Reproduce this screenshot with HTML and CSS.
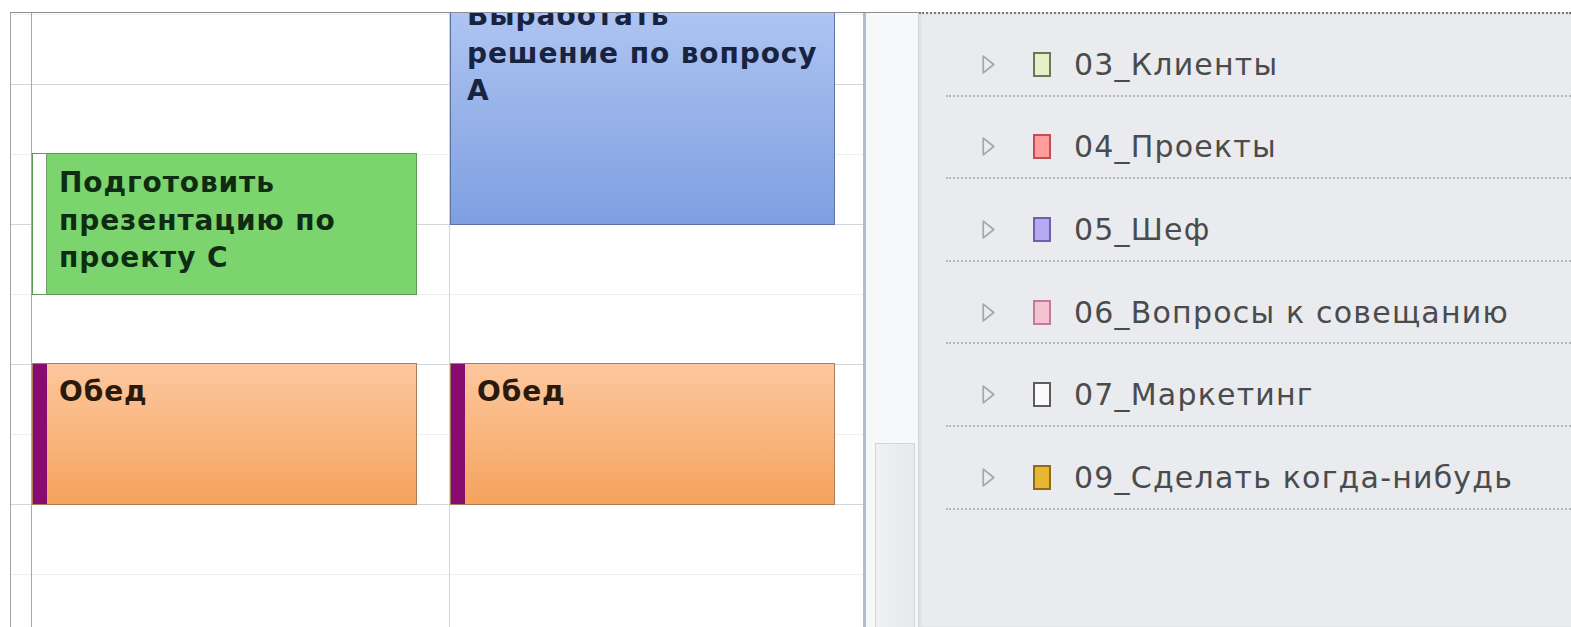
FILE: index.html
```html
<!DOCTYPE html>
<html lang="ru">
<head>
<meta charset="utf-8">
<title>Календарь</title>
<link rel="stylesheet" href="styles.css">
</head>
<body>
<div class="screen">
  <section class="cal">
    <div class="gutter"></div>
    <div class="frame">
      <div class="sheet">
        <div class="timecol"></div>

        <div class="day">
          <div class="appt appt--green" style="grid-row: 4 / 6">
            <span class="appt__status appt__status--free"></span>
            <div class="appt__body">
              <p class="appt__title">Подготовить<br>презентацию по<br>проекту С</p>
            </div>
          </div>
          <div class="appt appt--orange" style="grid-row: 7 / 9">
            <span class="appt__status appt__status--oof"></span>
            <div class="appt__body">
              <p class="appt__title">Обед</p>
            </div>
          </div>
        </div>

        <div class="day day--last">
          <div class="appt appt--blue appt--offset" style="grid-row: 1 / 5">
            <div class="appt__body">
              <p class="appt__title">Выработать<br>решение по вопросу<br>А</p>
            </div>
          </div>
          <div class="appt appt--orange" style="grid-row: 7 / 9">
            <span class="appt__status appt__status--oof"></span>
            <div class="appt__body">
              <p class="appt__title">Обед</p>
            </div>
          </div>
        </div>
      </div>
    </div>
  </section>

  <div class="vscroll">
    <div class="vscroll__track"></div>
    <div class="vscroll__thumb"></div>
  </div>

  <aside class="panel">
    <ul class="cats">
      <li class="cat">
        <svg class="cat__arrow" viewBox="0 0 14 20" aria-hidden="true"><polygon points="2,2 12,10 2,18"/></svg>
        <span class="cat__swatch cat__swatch--clients"></span>
        <span class="cat__name">03_Клиенты</span>
      </li>
      <li class="cat">
        <svg class="cat__arrow" viewBox="0 0 14 20" aria-hidden="true"><polygon points="2,2 12,10 2,18"/></svg>
        <span class="cat__swatch cat__swatch--projects"></span>
        <span class="cat__name">04_Проекты</span>
      </li>
      <li class="cat">
        <svg class="cat__arrow" viewBox="0 0 14 20" aria-hidden="true"><polygon points="2,2 12,10 2,18"/></svg>
        <span class="cat__swatch cat__swatch--chief"></span>
        <span class="cat__name">05_Шеф</span>
      </li>
      <li class="cat">
        <svg class="cat__arrow" viewBox="0 0 14 20" aria-hidden="true"><polygon points="2,2 12,10 2,18"/></svg>
        <span class="cat__swatch cat__swatch--meeting"></span>
        <span class="cat__name">06_Вопросы к совещанию</span>
      </li>
      <li class="cat">
        <svg class="cat__arrow" viewBox="0 0 14 20" aria-hidden="true"><polygon points="2,2 12,10 2,18"/></svg>
        <span class="cat__swatch cat__swatch--marketing"></span>
        <span class="cat__name">07_Маркетинг</span>
      </li>
      <li class="cat">
        <svg class="cat__arrow" viewBox="0 0 14 20" aria-hidden="true"><polygon points="2,2 12,10 2,18"/></svg>
        <span class="cat__swatch cat__swatch--someday"></span>
        <span class="cat__name">09_Сделать когда-нибудь</span>
      </li>
    </ul>
  </aside>
</div>
</body>
</html>
```
FILE: styles.css
```css
* {
  box-sizing: border-box;
  margin: 0;
  padding: 0;
}

html,
body {
  height: 100%;
  background: #fff;
}

body {
  font-family: "DejaVu Sans", "Noto Sans", sans-serif;
  overflow: hidden;
}

.screen {
  height: 627px;
  display: flex;
  padding-top: 12px;
  background: #fff;
}

/* ---------- calendar day view ---------- */

.cal {
  flex: none;
  width: 866px;
  display: flex;
}

.gutter {
  flex: none;
  width: 10px;
}

.frame {
  flex: 1;
  border-top: 1px solid #8b8e92;
  border-left: 1px solid #a2a6ab;
  overflow: hidden;
}

/* the sheet is scrolled: its first half-hour slot sits above the viewport */
.sheet {
  display: grid;
  grid-template-columns: 21px 418px 416px;
  height: 700px;
  margin-top: -69px;
  background-image: repeating-linear-gradient(
    to bottom,
    #d2d6db 0 1px,
    transparent 1px 70px,
    #eceef1 70px 71px,
    transparent 71px 140px
  );
}

.timecol {
  border-right: 1px solid #a5a9ae;
}

.day {
  display: grid;
  grid-template-rows: repeat(10, 70px);
  grid-template-columns: 385px;
  border-right: 1px solid #cdd4dc;
}

.day--last {
  border-right: 3px solid #b2bdcb;
}

/* ---------- appointments ---------- */

.appt {
  grid-column: 1;
  display: flex;
  margin: -1px 0;
  border: 1px solid;
  overflow: hidden;
}

/* starts a few minutes past the slot boundary */
.appt--offset {
  margin-top: 46px;
}

.appt__status {
  flex: none;
  width: 14px;
}

.appt__status--free {
  background: #fff;
  border-right: 1px solid #6f9c67;
}

.appt__status--oof {
  background: #8a0b70;
}

.appt__body {
  flex: 1;
  min-width: 0;
  padding: 10px 12px 6px;
}

.appt__title {
  font-weight: 700;
  font-size: 28px;
  line-height: 37.5px;
  letter-spacing: 0.9px;
}

.appt--green {
  background: #7bd46d;
  border-color: #5f9a57;
  color: #0f2c12;
}

.appt--orange {
  background: linear-gradient(to bottom, #fdc79e, #f5a35d);
  border-color: #a97d5a;
  color: #2b1a0c;
}

.appt--orange .appt__body {
  padding-top: 9px;
}

.appt--blue {
  background: linear-gradient(to bottom, #b3c8f4, #7e9fe0);
  border-color: #5c739f;
  color: #182340;
}

.appt--blue .appt__body {
  padding: 6px 12px 6px 16px;
}

/* ---------- vertical scrollbar ---------- */

.vscroll {
  flex: none;
  width: 53px;
  display: flex;
  flex-direction: column;
  border-top: 1px solid #8b8e92;
  border-right: 1px solid #d3d7dc;
  background: #f7f8fa;
}

.vscroll__track {
  flex: none;
  height: 430px;
}

.vscroll__thumb {
  flex: 1;
  margin: 0 3px 0 9px;
  border: 1px solid #d2d6db;
  border-bottom: 0;
  background: linear-gradient(to right, #eef0f3, #e7e9ec);
}

/* ---------- category list ---------- */

.panel {
  flex: 1;
  background: #e9ebee;
  border-top: 2px dotted #77797c;
  box-shadow: inset 2px 0 3px rgba(0, 0, 0, 0.05);
}

.cats {
  list-style: none;
  padding-left: 27px;
}

.cat {
  display: flex;
  align-items: center;
  height: 82.6px;
  padding-top: 20px;
  border-bottom: 2px dotted #b3b6ba;
}

.cat__arrow {
  flex: none;
  width: 15px;
  height: 21px;
  margin-left: 35px;
  fill: none;
  stroke: #a4a6a9;
  stroke-width: 1.6;
  stroke-linejoin: round;
}

.cat__swatch {
  flex: none;
  width: 18px;
  height: 25px;
  margin-left: 37px;
  border: 2px solid;
}

.cat__name {
  margin-left: 23px;
  font-size: 30px;
  letter-spacing: 1.2px;
  color: #4a4b4d;
  white-space: nowrap;
}

.cat__swatch--clients {
  background: #e5efc9;
  border-color: #6c7757;
}

.cat__swatch--projects {
  background: #ff9d9d;
  border-color: #c24e55;
}

.cat__swatch--chief {
  background: #b6a9f2;
  border-color: #6f5eb4;
}

.cat__swatch--meeting {
  background: #f5c2d2;
  border-color: #c27c94;
}

.cat__swatch--marketing {
  background: #fafafa;
  border-color: #5c5d60;
}

.cat__swatch--someday {
  background: #e7b633;
  border-color: #8d6c15;
}
```
